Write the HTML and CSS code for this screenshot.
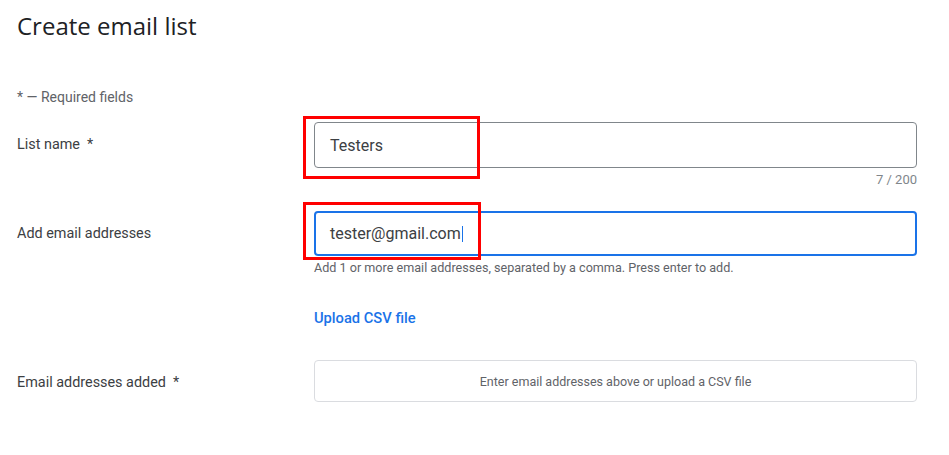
FILE: index.html
```html
<!DOCTYPE html>
<html lang="en">
<head>
<meta charset="utf-8">
<title>Create email list</title>
<link rel="stylesheet" href="styles.css">
</head>
<body>
<main class="page">
  <h1 class="title">Create email list</h1>
  <p class="required-note">* — Required fields</p>

  <div class="row row-name">
    <label class="label">List name&nbsp; *</label>
    <div class="control">
      <div class="field">
        <div class="input">Testers</div>
        <div class="highlight hl-1"></div>
      </div>
      <div class="counter">7 / 200</div>
    </div>
  </div>

  <div class="row row-emails">
    <label class="label">Add email addresses</label>
    <div class="control">
      <div class="field">
        <div class="input focused">tester@gmail.com<span class="caret"></span></div>
        <div class="highlight hl-2"></div>
      </div>
      <div class="helper">Add 1 or more email addresses, separated by a comma. Press enter to add.</div>
      <a class="upload" href="#">Upload CSV file</a>
    </div>
  </div>

  <div class="row row-added">
    <label class="label">Email addresses added&nbsp; *</label>
    <div class="control">
      <div class="empty-box">Enter email addresses above or upload a CSV file</div>
    </div>
  </div>
</main>
</body>
</html>
```

FILE: styles.css
```css
* { box-sizing: border-box; }
html, body { margin: 0; padding: 0; background: #fff; }
body {
  font-family: Roboto, "Liberation Sans", Arial, sans-serif;
  color: #3c4043;
}
.page {
  padding: 12px 32px 0 17px;
}
.title {
  margin: 0;
  font-family: "Open Sans", Roboto, sans-serif;
  font-weight: 400;
  font-size: 24px;
  line-height: 28px;
  color: #202124;
}
.required-note {
  margin: 49px 0 0;
  font-size: 14px;
  line-height: 16px;
  color: #5f6368;
}
.row {
  display: grid;
  grid-template-columns: 297px 1fr;
  align-items: start;
}
.label {
  font-size: 14.4px;
  line-height: 20px;
  color: #3c4043;
}
.row-name { margin-top: 17px; }
.row-name .label { padding-top: 13px; }
.row-emails .label { padding-top: 13px; }
.row-added .label { padding-top: 3px; }
.field { position: relative; }
.input {
  height: 46px;
  border: 1px solid #80868b;
  border-radius: 4px;
  padding: 0 15px;
  display: flex;
  align-items: center;
  font-size: 16px;
  color: #3c4043;
}
.input.focused {
  height: 45px;
  border: 2px solid #1a73e8;
  padding: 0 14px;
}
.caret {
  display: inline-block;
  width: 1px;
  height: 16px;
  background: #1a73e8;
  margin-left: 1px;
}
.highlight {
  position: absolute;
  border: 3px solid #ff0000;
  pointer-events: none;
}
.hl-1 { left: -11px; top: -6px; width: 177px; height: 63px; }
.hl-2 { left: -11px; top: -9px; width: 178px; height: 58px; }
.counter {
  text-align: right;
  font-size: 13px;
  line-height: 16px;
  margin-top: 4px;
  color: #80868b;
}
.row-emails { margin-top: 23px; }
.helper {
  font-size: 12.6px;
  line-height: 16px;
  margin-top: 4px;
  color: #5f6368;
}
.upload {
  display: inline-block;
  margin-top: 32px;
  font-size: 14.7px;
  line-height: 20px;
  font-weight: 500;
  color: #1a73e8;
  text-decoration: none;
}
.row-added { margin-top: 32px; align-items: center; }
.empty-box {
  height: 42px;
  border: 1px solid #dadce0;
  border-radius: 4px;
  display: flex;
  align-items: center;
  justify-content: center;
  font-size: 12.5px;
  color: #5f6368;
}
```
